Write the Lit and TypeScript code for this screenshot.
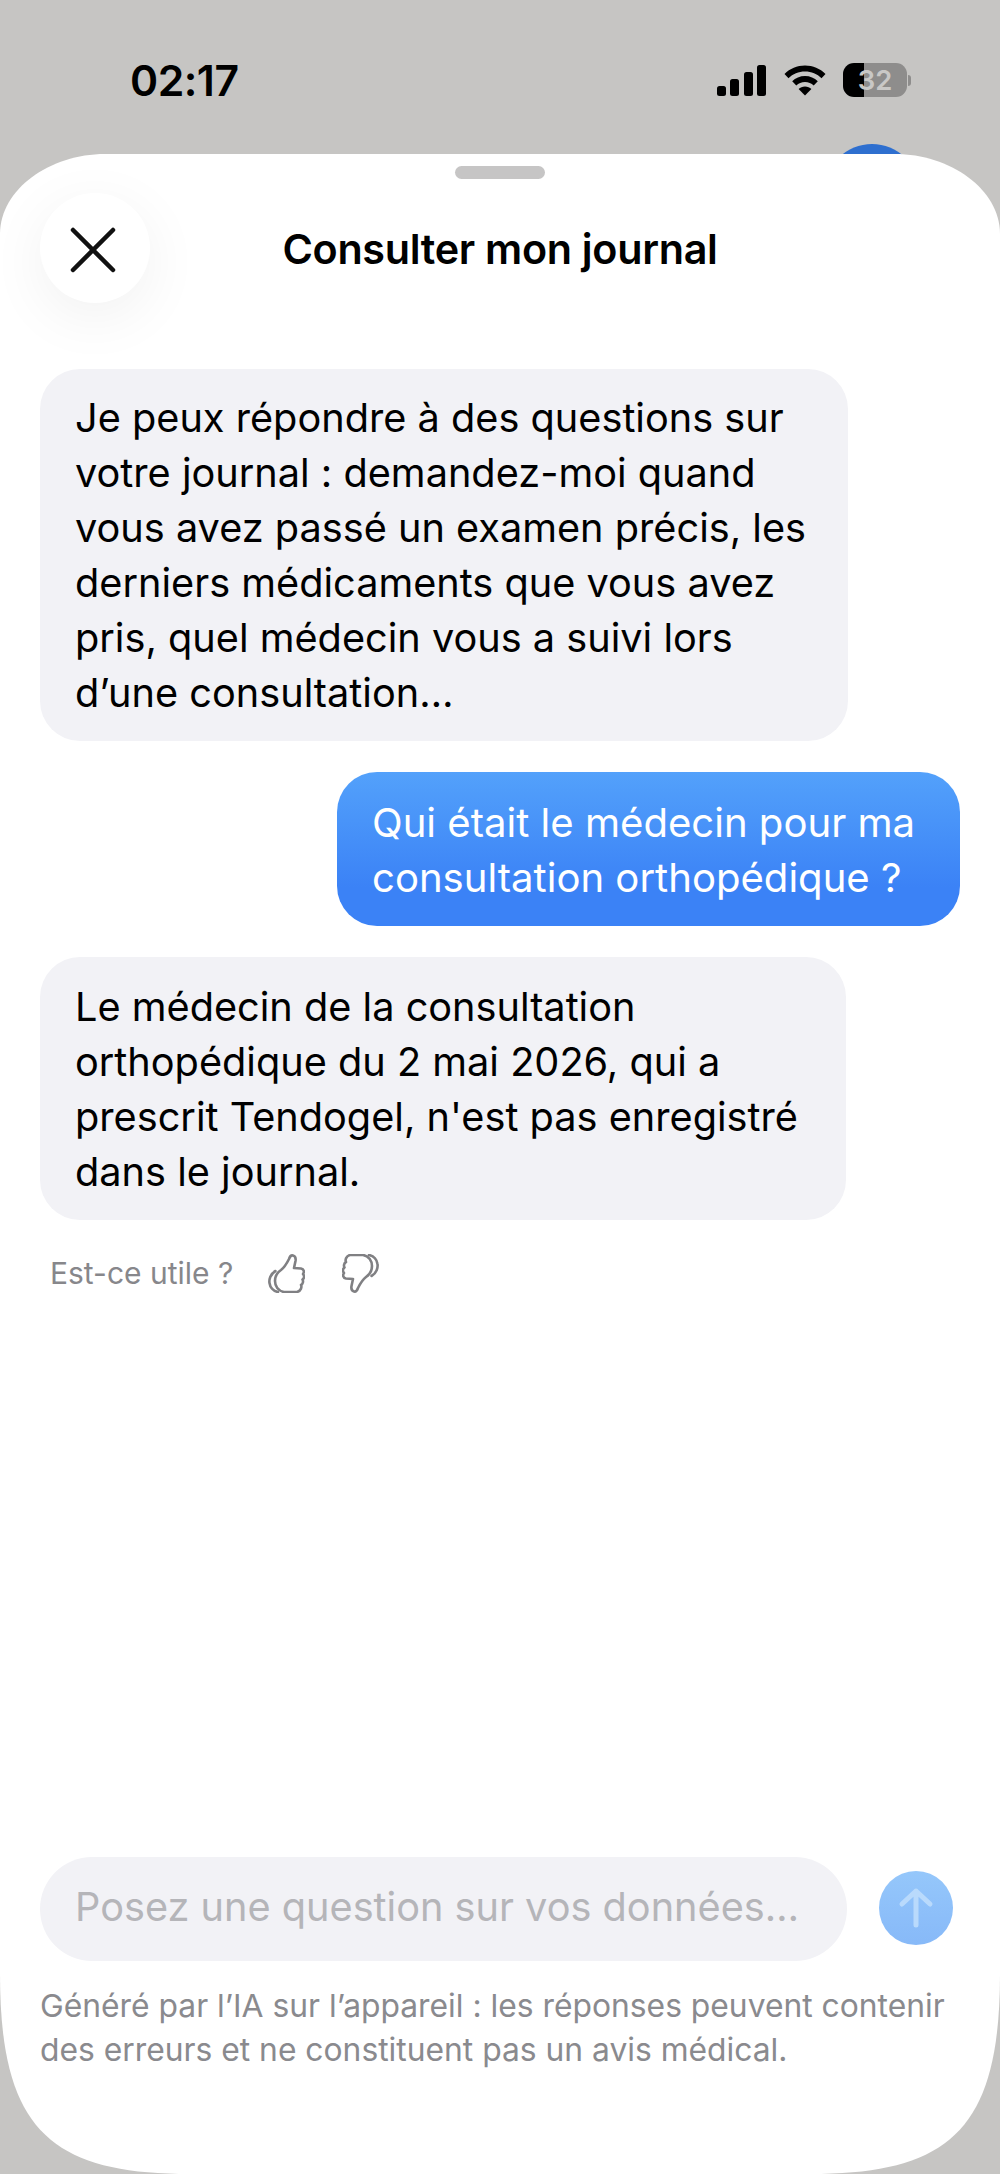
import { LitElement, html, css, svg } from "lit";
import { customElement } from "lit/decorators.js";

const thumb = svg`<path d="M7.500 17C2 20 1 26 1.500 29c.5 4 3.500 8 8.500 9" /><path d="M16 38c-6-1-9-6-9-11 0-6 3-9 6-11 4-3 6-7 8-11 1-3 2-4 4-3.500s3 2.500 2.500 5.500L26 14l7 .5c3 .5 3.500 3.500 2 5.500 1.500 1.500 1.500 4-.5 5.500 1 1.500.5 4.500-1.500 5.500 1 2 0 6-4 7z" />`;

@customElement("app-root")
export class AppRoot extends LitElement {
  static styles = css`
    :host {
      display: block;
      position: relative;
      width: 1000px;
      height: 2174px;
      overflow: hidden;
      background: #c6c5c3;
      font-family: Inter, "Liberation Sans", sans-serif;
      color: #000;
    }
    .behind {
      position: absolute;
      left: 825px;
      top: 144px;
      width: 94px;
      height: 94px;
      border-radius: 50%;
      background: #2e6fcf;
    }
    .status {
      height: 154px;
      box-sizing: border-box;
      padding: 57px 89px 0 130px;
      display: flex;
      justify-content: space-between;
      align-items: flex-start;
    }
    .time {
      font-size: 42.700px;
      line-height: 48px;
      font-weight: 600;
      letter-spacing: -0.5px;
    }
    .indicators {
      display: flex;
      align-items: center;
      height: 46px;
    }
    .wifi {
      margin: 0 17px 0 18px;
    }
    .battery {
      width: 64px;
      height: 34px;
      border-radius: 11px;
      overflow: hidden;
      background: linear-gradient(90deg, #000 0 33%, #8e8d8c 33% 100%);
      color: #c9c8c6;
      font-size: 27.500px;
      font-weight: 600;
      line-height: 34px;
      text-align: center;
    }
    .nub {
      width: 3px;
      height: 11px;
      margin-left: 1px;
      border-radius: 0 3px 3px 0;
      background: #8e8d8c;
    }
    .sheet {
      height: 2020px;
      box-sizing: border-box;
      position: relative;
      background: #fff;
      clip-path: path("M0 80C0 35 50 0 105 0H895C950 0 1000 35 1000 80V1820C1000 1975 950 2020 810 2020H190C50 2020 0 1975 0 1820Z");
      display: flex;
      flex-direction: column;
      padding: 0 40px;
    }
    .handle {
      align-self: center;
      width: 90px;
      height: 13px;
      margin-top: 12px;
      border-radius: 7px;
      background: #c6c5c5;
    }
    .header {
      height: 110px;
      margin-top: 14px;
      display: flex;
      align-items: center;
      justify-content: center;
      position: relative;
    }
    .title {
      margin-top: 1px;
      font-size: 41.300px;
      font-weight: 600;
      letter-spacing: -0.3px;
    }
    .close {
      position: absolute;
      left: 0;
      top: 0;
      width: 110px;
      height: 110px;
      border-radius: 50%;
      background: #fff;
      box-shadow: 0 14px 60px rgba(0, 0, 0, 0.06);
      display: flex;
      align-items: center;
      justify-content: center;
    }
    .close svg {
      margin: 3px 4px 0 0;
    }
    .thread {
      display: flex;
      flex-direction: column;
      align-items: flex-start;
      margin-top: 66px;
    }
    .bubble {
      box-sizing: border-box;
      border-radius: 40px;
      padding: 22px 35px 20px;
      font-size: 39.700px;
      line-height: 55px;
      white-space: nowrap;
    }
    .bot {
      background: #f2f2f6;
    }
    .first {
      width: 808px;
    }
    .third {
      width: 806px;
      margin-top: 31px;
      padding: 23px 35px 20px;
    }
    .me {
      align-self: flex-end;
      width: 623px;
      margin-top: 31px;
      padding: 23px 35px 21px;
      font-size: 40.100px;
      color: #fff;
      background: linear-gradient(180deg, #53a1fb 0%, #3b82f6 75%);
    }
    .feedback {
      display: flex;
      align-items: center;
      margin: 28px 0 0 10px;
      color: #87878b;
      font-size: 30px;
      line-height: 50px;
    }
    .feedback svg {
      fill: none;
      stroke: #808083;
      stroke-width: 2.600;
      stroke-linejoin: round;
      stroke-linecap: round;
    }
    .up {
      margin-left: 35px;
    }
    .down {
      margin-left: 37px;
      transform: rotate(180deg);
    }
    .spacer {
      flex: 1;
    }
    .composer {
      display: flex;
      align-items: center;
    }
    .input {
      box-sizing: border-box;
      width: 807px;
      height: 104px;
      border-radius: 52px;
      padding: 0 35px;
      background: #f2f2f6;
      color: #b5b5b9;
      font-size: 39.700px;
      line-height: 100px;
      white-space: nowrap;
    }
    .send {
      width: 74px;
      height: 74px;
      margin-left: 32px;
      margin-top: -2px;
      border-radius: 50%;
      background: linear-gradient(180deg, #95c7fb 0%, #87b9f8 100%);
      display: flex;
      align-items: center;
      justify-content: center;
    }
    .note {
      margin: 23px -10px 102px 0;
      color: #8a8a8e;
      font-size: 31.800px;
      line-height: 44px;
      white-space: nowrap;
    }
  `;

  render() {
    return html`
      <div class="behind"></div>
      <div class="status">
        <div class="time">02:17</div>
        <div class="indicators">
          <svg width="49" height="31" viewBox="0 0 49 31">
            <rect x="0" y="21" width="9" height="10" rx="2.500" />
            <rect x="13" y="14" width="9" height="17" rx="2.500" />
            <rect x="27" y="7" width="9" height="24" rx="2.500" />
            <rect x="40" y="0" width="9" height="31" rx="2.500" />
          </svg>
          <svg class="wifi" width="42" height="31" viewBox="0 0 42 30">
            <path d="M21 0C13 0 6 3 0.500 8.500l4 4.200C8.800 8.400 14.600 6 21 6s12.200 2.400 16.500 6.700l4-4.200C36 3 29 0 21 0z" />
            <path d="M21 10.500c-5 0-9.500 2-12.800 5.200l4.100 4.200c2.200-2.200 5.300-3.500 8.700-3.500s6.500 1.300 8.700 3.500l4.100-4.200C30.500 12.500 26 10.500 21 10.500z" />
            <path d="M21 21c-2.600 0-4.800 1-6.400 2.500L21 30l6.400-6.500C25.800 22 23.600 21 21 21z" />
          </svg>
          <div class="battery">32</div>
          <div class="nub"></div>
        </div>
      </div>
      <div class="sheet">
        <div class="handle"></div>
        <div class="header">
          <div class="close">
            <svg width="46" height="46" viewBox="0 0 46 46" fill="none" stroke="#111" stroke-width="4.500" stroke-linecap="round">
              <path d="M3 3l40 40M43 3L3 43" />
            </svg>
          </div>
          <div class="title">Consulter mon journal</div>
        </div>
        <div class="thread">
          <div class="bubble bot first">
            Je peux répondre à des questions sur<br />
            votre journal : demandez-moi quand<br />
            vous avez passé un examen précis, les<br />
            derniers médicaments que vous avez<br />
            pris, quel médecin vous a suivi lors<br />
            d’une consultation…
          </div>
          <div class="bubble me">
            Qui était le médecin pour ma<br />
            consultation orthopédique ?
          </div>
          <div class="bubble bot third">
            Le médecin de la consultation<br />
            orthopédique du 2 mai 2026, qui a<br />
            prescrit Tendogel, n'est pas enregistré<br />
            dans le journal.
          </div>
          <div class="feedback">
            <span>Est-ce utile ?</span>
            <svg class="up" width="37" height="39" viewBox="0 0 37 39">${thumb}</svg>
            <svg class="down" width="37" height="39" viewBox="0 0 37 39">${thumb}</svg>
          </div>
        </div>
        <div class="spacer"></div>
        <div class="composer">
          <div class="input">Posez une question sur vos données…</div>
          <div class="send">
            <svg width="36" height="42" viewBox="0 0 36 42" fill="none" stroke="#b9dafc" stroke-width="5" stroke-linecap="round" stroke-linejoin="round">
              <path d="M18 38V4M4 17L18 4l14 13" />
            </svg>
          </div>
        </div>
        <div class="note">
          Généré par l’IA sur l’appareil : les réponses peuvent contenir<br />
          des erreurs et ne constituent pas un avis médical.
        </div>
      </div>
    `;
  }
}
